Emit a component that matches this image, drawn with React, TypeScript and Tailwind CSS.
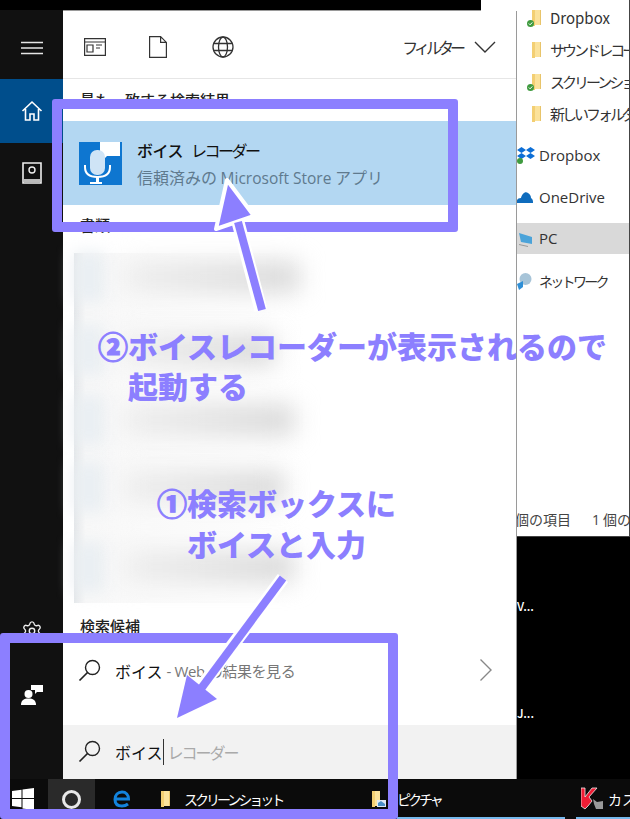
import { Settings } from "lucide-react";

const jp = "font-['Noto_Sans_CJK_JP','Noto_Sans',sans-serif]";
const latin = "font-['Open_Sans','Noto_Sans_CJK_JP',sans-serif]";

function SearchGlyph() {
  return (
    <svg width="26" height="26" viewBox="0 0 26 26" fill="none" stroke="#222" strokeWidth="1.4" className="shrink-0">
      <circle cx="15.5" cy="9.5" r="7" />
      <path d="M10.5 14.5 2.5 22.5" strokeWidth="1.7" />
    </svg>
  );
}

function Folder({ check }: { check?: boolean }) {
  return (
    <svg width="20" height="20" viewBox="0 0 20 20" className="shrink-0">
      <path d="M5 2h8v15H5z" fill="#fbe29b" />
      <path d="M5 2h3v16H5z" fill="#f3cf73" />
      <path d="M13 2h1v15h-1z" fill="#e8c46a" />
      {check && <circle cx="3.5" cy="15.5" r="3.5" fill="#3f9b3f" />}
      {check && <path d="M1.8 15.5l1.3 1.3 2.2-2.4" stroke="#fff" strokeWidth="1" fill="none" />}
    </svg>
  );
}

function ExplorerFile({ name, check, jpName }: { name: string; check?: boolean; jpName?: boolean }) {
  return (
    <div className="flex h-[32px] items-center gap-[3px] pl-[2px] text-[15px] text-[#333] whitespace-nowrap">
      <Folder check={check} />
      <span className={jpName ? "tracking-[-3px]" : ""}>{name}</span>
    </div>
  );
}

function BlurRow({ width, top }: { width: string; top: string }) {
  return (
    <div className={`flex h-[44px] items-center gap-[20px] ${top}`}>
      <div className="h-[50px] w-[30px] bg-[#e9eef2] blur-[8px]" />
      <div className={`h-[30px] ${width} bg-linear-to-r from-[#eeeeee] to-[#d6d6d6] blur-[12px]`} />
    </div>
  );
}

export default function App() {
  return (
    <div className={`relative h-[819px] w-[630px] overflow-hidden bg-black ${jp}`}>
      <div className="flex h-[779px]">
        {/* 左のサイドバー */}
        <div className="mt-[10px] flex w-[63px] shrink-0 flex-col bg-[#111111] text-white">
          <div className="flex h-[69px] items-center justify-center pt-[7px]">
            <svg width="22" height="14" viewBox="0 0 22 14" stroke="#e6e6e6" strokeWidth="1.3">
              <path d="M0 1.5h22M0 7h22M0 12.5h22" />
            </svg>
          </div>
          <div className="flex h-[64px] items-center justify-center bg-[#004e8c]">
            <svg width="22" height="22" viewBox="0 0 22 22" fill="none" stroke="#fff" strokeWidth="1.6">
              <path d="M1.5 11 11 2l9.5 9M4.5 9v11h4.500v-6h4v6h4.500V9" />
            </svg>
          </div>
          <div className="flex h-[60px] items-center justify-center">
            <svg width="20" height="22" viewBox="0 0 20 22">
              <path d="M1 1h18v20H1z" fill="#111" stroke="#eee" strokeWidth="1.6" />
              <circle cx="10" cy="8" r="3" fill="none" stroke="#eee" strokeWidth="1.4" />
              <path d="M2 17h16v3H2z" fill="#bbb" />
            </svg>
          </div>
          <div className="mt-auto flex flex-col items-center pb-[74px]">
            <Settings size={22} strokeWidth={1.5} className="text-[#eee]" />
            <svg width="22" height="22" viewBox="0 0 22 22" fill="#fff" className="mt-[41px]">
              <circle cx="7.5" cy="11" r="4" />
              <path d="M0 22c0-5 3-6.500 7.500-6.500S15 17 15 22z" />
              <path d="M10 2h12v7h-6l-2 2V7h-4z" />
            </svg>
          </div>
        </div>

        {/* 検索パネル */}
        <div className="mt-[10px] flex w-[454px] shrink-0 flex-col border-t border-r border-[#9a9a9a] bg-white">
          <div className="flex h-[68px] shrink-0 items-center border-b border-[#e6e6e6] pt-[4px] pr-[20px] pl-[21px]">
            <svg width="22" height="18" viewBox="0 0 22 18" fill="none" stroke="#333" strokeWidth="1.2">
              <path d="M.6.6h20.800v16.800H.6zM.6 4h20.800" />
              <path d="M3 7h6v7H3zM12 7h6M12 10h4" />
            </svg>
            <svg width="18" height="22" viewBox="0 0 18 22" fill="none" stroke="#333" strokeWidth="1.2" className="ml-[43px]">
              <path d="M.6.6h11l5.800 5.800v15H.6zM11.600.6v5.800h5.800" />
            </svg>
            <svg width="22" height="22" viewBox="0 0 22 22" fill="none" stroke="#333" strokeWidth="1.3" className="ml-[45px]">
              <circle cx="11" cy="11" r="10" />
              <ellipse cx="11" cy="11" rx="4.500" ry="10" />
              <path d="M1.500 7.500h19M1.500 14.500h19" />
            </svg>
            <span className="ml-auto text-[16px] tracking-[-4px] text-[#333]">フィルター</span>
            <svg width="22" height="12" viewBox="0 0 22 12" fill="none" stroke="#333" strokeWidth="1.4" className="ml-[12px]">
              <path d="M1 1l10 10L21 1" />
            </svg>
          </div>

          <div className="h-[42px] shrink-0 pt-[10px] pl-[17px] text-[15px] font-medium leading-[22px] text-[#222]">
            最も一致する検索結果
          </div>

          <div className="flex h-[84px] shrink-0 items-center bg-[#b3d7f2] pl-[16px]">
            <svg width="43" height="43" viewBox="0 0 43 43" className="shrink-0">
              <path d="M0 0h43v43H0z" fill="#0e76d0" />
              <path d="M21 0h20v14H28l-3 3v-3h-4z" fill="#fff" />
              <rect x="11" y="8" width="15" height="25" rx="7" fill="#cfe4f6" />
              <path d="M6 23v2c0 7 5 10 12.500 10S31 32 31 25v-2" fill="none" stroke="#fff" strokeWidth="2" />
              <path d="M17 35h3v5h3v2H11v-2h6z" fill="#fff" />
            </svg>
            <div className="ml-[15px] flex flex-col">
              <div className="flex items-baseline leading-[24px] text-[#111]">
                <span className="text-[16px] font-medium tracking-[-0.5px]">ボイス</span>
                <span className="ml-[8px] text-[16px] tracking-[-2.5px]">レコーダー</span>
              </div>
              <span className="mt-[4px] text-[16px] leading-[22px] text-[#5f7a8e]">
                信頼済みの <span className={`${latin} text-[15.5px]`}>Microsoft Store</span> アプリ
              </span>
            </div>
          </div>

          <div className="h-[48px] shrink-0 pt-[9px] pl-[17px] text-[15px] font-medium leading-[22px] text-[#222]">
            書類
          </div>

          {/* ぼかした一覧 */}
          <div className="ml-[11px] h-[350px] w-[232px] shrink-0 bg-linear-to-r from-[#e4e7ea] from-0% via-[#f8f8f8] via-5% to-white pt-[2px]">
            <BlurRow width="w-[175px]" top="mt-0" />
            <BlurRow width="w-[150px]" top="mt-[29px]" />
            <BlurRow width="w-[170px]" top="mt-[26px]" />
            <BlurRow width="w-[160px]" top="mt-[23px]" />
            <BlurRow width="w-[170px]" top="mt-[36px]" />
          </div>

          <div className="h-[42px] shrink-0 pt-[12px] pl-[17px] text-[15px] font-medium leading-[22px] text-[#222]">
            検索候補
          </div>

          <div className="flex h-[80px] shrink-0 items-start pt-[13px] pr-[23px] pl-[14px]">
            <SearchGlyph />
            <span className="ml-[12px] text-[16px] leading-[26px] text-[#111]">ボイス</span>
            <span className="ml-[4px] text-[15px] leading-[26px] tracking-[-0.4px] text-[#777]">
              <span className={latin}>- Web</span> の結果を見る
            </span>
            <svg width="14" height="24" viewBox="0 0 14 24" fill="none" stroke="#888" strokeWidth="1.400" className="ml-auto">
              <path d="M1.500 1.500 12 12 1.500 22.500" />
            </svg>
          </div>

          <div className="flex flex-1 items-center bg-[#f2f2f2] pl-[14px]">
            <SearchGlyph />
            <span className="ml-[12px] text-[16px] text-[#111]">ボイス</span>
            <span className="h-[26px] w-[1px] bg-[#333]" />
            <span className="ml-[4px] text-[16px] tracking-[-2px] text-[#aaa]">レコーダー</span>
          </div>
        </div>

        {/* 右のエクスプローラー */}
        <div className="flex min-w-0 flex-1 flex-col">
          <div className="flex h-[537px] flex-col overflow-hidden border-r border-b border-[#444] bg-white pt-[2px] whitespace-nowrap">
            <div className="pl-[8px]">
              <ExplorerFile name="Dropbox" check />
              <ExplorerFile name="サウンド レコー" jpName />
              <ExplorerFile name="スクリーンショ" check jpName />
              <ExplorerFile name="新しいフォルダ" jpName />
            </div>
            <div className="mt-[4px] flex h-[42px] items-center gap-[4px] text-[15px] text-[#333]">
              <svg width="18" height="18" viewBox="0 0 18 18" fill="#0d6fd6" className="shrink-0">
                <path d="M4.500 1 9 4 4.500 7 0 4zM13.500 1 18 4l-4.500 3L9 4zM4.500 7 9 10l-4.500 3L0 10zM13.500 7l4.500 3-4.500 3L9 10z" />
                <circle cx="3" cy="15" r="3" fill="#3f9b3f" />
              </svg>
              <span className={latin}>Dropbox</span>
            </div>
            <div className="flex h-[42px] items-center gap-[6px] text-[15px] text-[#333]">
              <svg width="16" height="12" viewBox="0 0 16 12" fill="#0f6cbd" className="shrink-0">
                <path d="M0 12c-1-3 1-5 4-5 1-4 4-7 7-5 2 1 3 3 3 5 2 1 2 3 2 5z" />
              </svg>
              <span className={latin}>OneDrive</span>
            </div>
            <div className="mt-[5px] flex h-[31px] items-center gap-[6px] bg-[#d9d9d9] text-[15px] text-[#333]">
              <svg width="16" height="16" viewBox="0 0 16 16" className="shrink-0">
                <path d="M2 2l13 4v7L4 11z" fill="#4ba3d9" />
                <path d="M2 13l9 2v1l-9-2z" fill="#999" />
              </svg>
              <span className={latin}>PC</span>
            </div>
            <div className="mt-[6px] flex h-[42px] items-center gap-[5px] text-[14px] text-[#333]">
              <svg width="17" height="17" viewBox="0 0 17 17" className="shrink-0">
                <circle cx="8.500" cy="6" r="6" fill="#a7c4d8" />
                <path d="M0 11l6-3v6l-4 3z" fill="#2f8fd6" />
              </svg>
              <span className="tracking-[-2.700px]">ネットワーク</span>
            </div>
            <div className="mt-auto flex h-[32px] items-center pb-[2px] text-[14px] text-[#444]">
              <span className="ml-[-2px]">個の項目</span>
              <span className={`ml-[21px] ${latin}`}>1</span>
              <span className="ml-[3px]">個の</span>
            </div>
          </div>
          <div className="pt-[61px] text-[12px] leading-[16px] font-medium text-white">
            <div>V...</div>
            <div className="mt-[91px]">J...</div>
          </div>
        </div>
      </div>

      {/* タスクバー */}
      <div className="flex h-[40px] items-center bg-[#0b0b0b] text-white">
        <svg width="22" height="22" viewBox="0 0 22 22" fill="#fff" className="ml-[12px] shrink-0">
          <path d="M0 3l9.500-1.300V10H0zM10.500 1.500 22 0v10H10.500zM0 11h9.500v8.300L0 18zM10.500 11H22v11l-11.500-1.600z" />
        </svg>
        <div className="ml-[14px] flex h-full w-[47px] shrink-0 items-center justify-center bg-[#2a2a2a]">
          <div className="h-[19px] w-[19px] rounded-full border-[3px] border-[#e8e8e8]" />
        </div>
        <svg width="18" height="18" viewBox="0 0 18 18" fill="none" stroke="#1383dd" strokeWidth="3" className="ml-[18px] shrink-0">
          <path d="M2.500 9h13c0-4-2.500-7-6.500-7S2 5 2 9.500 5 16 9 16c2.500 0 4.500-.8 6-2" />
        </svg>
        <div className="ml-[25px] flex w-[127px] shrink-0 items-center gap-[8px]">
          <Folder />
          <span className="text-[14px] tracking-[-3px] whitespace-nowrap">スクリーンショット</span>
        </div>
        <div className="ml-[84px] flex w-[74px] shrink-0 items-center gap-[10px]">
          <svg width="20" height="20" viewBox="0 0 20 20" className="shrink-0">
            <path d="M5 2h8v15H5z" fill="#fbe29b" />
            <path d="M5 2h3v16H5z" fill="#f3cf73" />
            <path d="M10 11h9v7h-9z" fill="#dfeaf5" />
            <path d="M11 14l3-2 4 3v2h-7z" fill="#4a90c8" />
          </svg>
          <span className="text-[14px] tracking-[-3px] whitespace-nowrap">ピクチャ</span>
        </div>
        <svg width="24" height="24" viewBox="0 0 24 24" className="ml-[140px] shrink-0">
          <path d="M0 1h4v9l7-9h5l-8 9 3 4-4 5-3 3-4-3z" fill="#ee1c34" stroke="#eee" strokeWidth="0.8" />
          <path d="M12 12l4 3 6-1v8h-7l-2-5z" fill="#999" />
        </svg>
        <span className="ml-[3px] text-[14px] whitespace-nowrap">カス</span>
      </div>
      <div className="absolute bottom-0 left-[397px] h-[2px] w-[168px] bg-[#76b9ed]" />
      <div className="absolute bottom-0 left-[576px] h-[2px] w-[54px] bg-[#76b9ed]" />

      {/* エクスプローラーの上の切れ端 */}
      <div className="absolute top-0 left-[481px] h-[11px] w-[36px] bg-white" />

      {/* 注釈 */}
      <div className="absolute top-[99px] left-[52px] h-[133px] w-[406px] rounded-[3px] border-[10px] border-[#8c7fff]" />
      <div className="absolute top-[633px] left-0 h-[186px] w-[398px] rounded-[3px] border-[10px] border-[#8c7fff]" />
      <svg width="630" height="819" viewBox="0 0 630 819" className="absolute top-0 left-0">
        <path d="M238 222 261 310" stroke="#fff" strokeWidth="13" />
        <path d="M227 180 254 216 216 229z" fill="#8c7fff" stroke="#fff" strokeWidth="4" strokeLinejoin="round" />
        <path d="M238 222 262 310" stroke="#8c7fff" strokeWidth="8" />
        <path d="M283 578 205 682" stroke="#fff" strokeWidth="13" />
        <path d="M177 718 217 699 187 675z" fill="#8c7fff" />
        <path d="M283 578 200 690" stroke="#8c7fff" strokeWidth="8" />
      </svg>
      <div className="absolute top-[325px] left-[98px] text-[30px] leading-[40px] font-black whitespace-nowrap text-[#8c7fff]">
        <div><span className="[-webkit-text-stroke:1px_#8c7fff]">②</span>ボイスレコーダーが表示されるので</div>
        <div className="pl-[30px]">起動する</div>
      </div>
      <div className="absolute top-[482px] left-[157px] text-[30px] leading-[41px] font-black whitespace-nowrap text-[#8c7fff]">
        <div><span className="[-webkit-text-stroke:1px_#8c7fff]">①</span>検索ボックスに</div>
        <div className="pl-[30px]">ボイスと入力</div>
      </div>
    </div>
  );
}
